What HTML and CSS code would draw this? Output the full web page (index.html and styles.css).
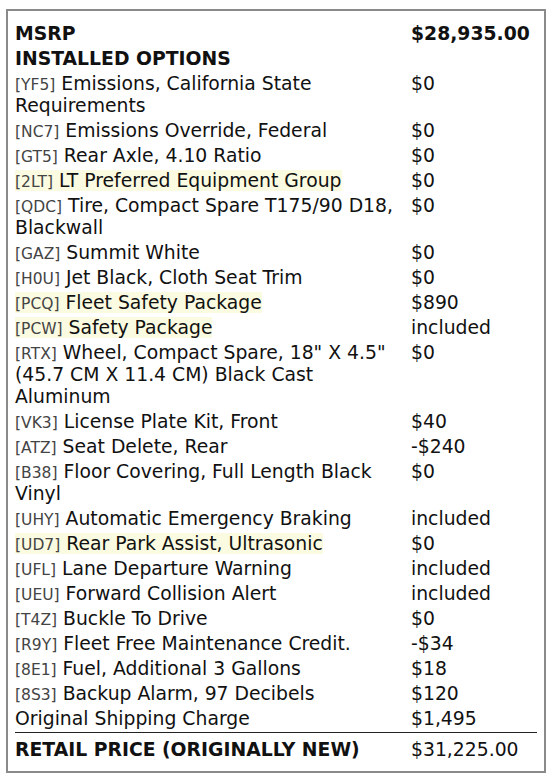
FILE: index.html
```html
<!DOCTYPE html>
<html>
<head>
<meta charset="utf-8">
<link rel="stylesheet" href="styles.css">
</head>
<body>
<div class="sheet">
<table class="price">
<tr class="head"><td class="desc">MSRP</td><td class="amt">$28,935.00</td></tr>
<tr class="head"><td class="desc" colspan="2">INSTALLED OPTIONS</td></tr>
<tr><td class="desc"><span class="code">[YF5]</span> Emissions, California State Requirements</td><td class="amt">$0</td></tr>
<tr><td class="desc"><span class="code">[NC7]</span> Emissions Override, Federal</td><td class="amt">$0</td></tr>
<tr><td class="desc"><span class="code">[GT5]</span> Rear Axle, 4.10 Ratio</td><td class="amt">$0</td></tr>
<tr><td class="desc"><span class="hl"><span class="code">[2LT]</span> LT Preferred Equipment Group</span></td><td class="amt">$0</td></tr>
<tr><td class="desc"><span class="code">[QDC]</span> Tire, Compact Spare T175/90 D18, Blackwall</td><td class="amt">$0</td></tr>
<tr><td class="desc"><span class="code">[GAZ]</span> Summit White</td><td class="amt">$0</td></tr>
<tr><td class="desc"><span class="code">[H0U]</span> Jet Black, Cloth Seat Trim</td><td class="amt">$0</td></tr>
<tr><td class="desc"><span class="hl"><span class="code">[PCQ]</span> Fleet Safety Package</span></td><td class="amt">$890</td></tr>
<tr><td class="desc"><span class="hl"><span class="code">[PCW]</span> Safety Package</span></td><td class="amt">included</td></tr>
<tr><td class="desc"><span class="code">[RTX]</span> Wheel, Compact Spare, 18" X 4.5" (45.7 CM X 11.4 CM) Black Cast Aluminum</td><td class="amt">$0</td></tr>
<tr><td class="desc"><span class="code">[VK3]</span> License Plate Kit, Front</td><td class="amt">$40</td></tr>
<tr><td class="desc"><span class="code">[ATZ]</span> Seat Delete, Rear</td><td class="amt">-$240</td></tr>
<tr><td class="desc"><span class="code">[B38]</span> Floor Covering, Full Length Black Vinyl</td><td class="amt">$0</td></tr>
<tr><td class="desc"><span class="code">[UHY]</span> Automatic Emergency Braking</td><td class="amt">included</td></tr>
<tr><td class="desc"><span class="hl"><span class="code">[UD7]</span> Rear Park Assist, Ultrasonic</span></td><td class="amt">$0</td></tr>
<tr><td class="desc"><span class="code">[UFL]</span> Lane Departure Warning</td><td class="amt">included</td></tr>
<tr><td class="desc"><span class="code">[UEU]</span> Forward Collision Alert</td><td class="amt">included</td></tr>
<tr><td class="desc"><span class="code">[T4Z]</span> Buckle To Drive</td><td class="amt">$0</td></tr>
<tr><td class="desc"><span class="code">[R9Y]</span> Fleet Free Maintenance Credit.</td><td class="amt">-$34</td></tr>
<tr><td class="desc"><span class="code">[8E1]</span> Fuel, Additional 3 Gallons</td><td class="amt">$18</td></tr>
<tr><td class="desc"><span class="code">[8S3]</span> Backup Alarm, 97 Decibels</td><td class="amt">$120</td></tr>
<tr><td class="desc">Original Shipping Charge</td><td class="amt">$1,495</td></tr>
<tr class="total"><td class="desc">RETAIL PRICE (ORIGINALLY NEW)</td><td class="amt">$31,225.00</td></tr>
</table>
</div>
</body>
</html>
```

FILE: styles.css
```css
html, body {
  margin: 0;
  padding: 0;
  background: #fff;
}
body {
  padding: 9px 6px 0 6px;
  font-family: "DejaVu Sans", sans-serif;
  color: #111;
}
.sheet {
  width: 540px;
  box-sizing: border-box;
  border: 2px solid #8a8a8a;
  padding: 11px 7px 8px 7px;
}
.price {
  width: 100%;
  border-collapse: collapse;
  table-layout: fixed;
  font-size: 18.8px;
  line-height: 22px;
}
.price td {
  padding: 1px 0 2px 0;
  vertical-align: top;
}
.price .desc {
  width: 390px;
  padding-right: 6px;
}
.amt {
  white-space: nowrap;
}
.head td {
  font-weight: bold;
}
.code {
  font-size: 15.5px;
  line-height: 1;
  color: #444;
}
.hl {
  background: #fbfbe1;
}
.total td {
  border-top: 1px solid #222;
  padding-top: 6px;
}
.total .desc {
  font-weight: bold;
}
```
